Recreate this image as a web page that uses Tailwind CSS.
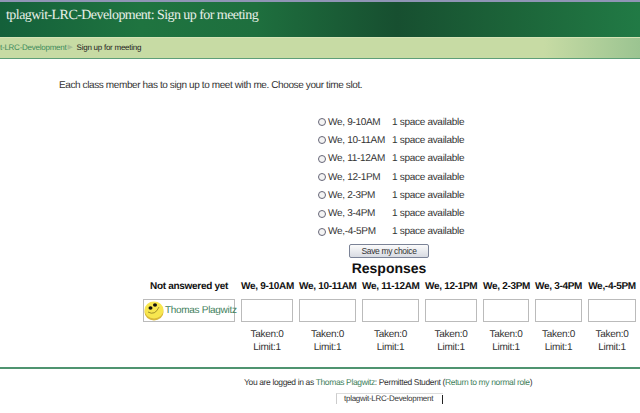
<!DOCTYPE html>
<html lang="en">
<head>
  <meta charset="UTF-8" />
  <title>tplagwit-LRC-Development: Sign up for meeting</title>
  <script src="https://cdn.jsdelivr.net/npm/@tailwindcss/browser@4"></script>
</head>
<body class="w-[640px] h-[413px] overflow-hidden bg-white font-['Liberation_Sans',Arial,sans-serif] text-[#333] [text-rendering:geometricPrecision]">
  <div class="h-[2px] bg-[#8f95b5]"></div>
  <header class="h-[35px] pl-[6px] pt-[5px] bg-[linear-gradient(90deg,#14603a_0%,#1f7440_22%,#1e6f3e_40%,#174f30_62%,#1c6439_80%,#217a45_100%)]">
    <h1 class="font-['Liberation_Serif',serif] text-[14px] tracking-[-0.55px] leading-[18px] text-[#e8f0e8]">tplagwit-LRC-Development: Sign up for meeting</h1>
  </header>
  <nav class="h-[22px] flex items-center overflow-hidden border-t border-b border-t-[#d5e3b5] border-b-[#5f9f78] bg-[linear-gradient(90deg,#c7dba4_0%,#c7dba4_85%,#9bc491_100%)] text-[8px] tracking-[-0.25px]">
    <a href="#" class="text-[#3d8a5a] whitespace-nowrap">t-LRC-Development</a>
    <span class="ml-[1px] text-[7px] text-[#a8bd95]">&#9654;</span>
    <span class="ml-[4px] text-[#222]">Sign up for meeting</span>
  </nav>

  <p class="mt-[20px] ml-[59px] text-[10px] tracking-[-0.39px] leading-[13px]">Each class member has to sign up to meet with me. Choose your time slot.</p>

  <form class="mt-[21px] ml-[318px] flex flex-col text-[10px] tracking-[-0.3px] whitespace-nowrap">
    <label class="h-[18.3px] flex items-center"><span class="w-[8px] h-[8px] rounded-full border border-[#667] bg-[#f4f4f4]"></span><span class="ml-[2px] w-[64px]">We, 9-10AM</span><span>1 space available</span></label>
    <label class="h-[18.3px] flex items-center"><span class="w-[8px] h-[8px] rounded-full border border-[#667] bg-[#f4f4f4]"></span><span class="ml-[2px] w-[64px]">We, 10-11AM</span><span>1 space available</span></label>
    <label class="h-[18.3px] flex items-center"><span class="w-[8px] h-[8px] rounded-full border border-[#667] bg-[#f4f4f4]"></span><span class="ml-[2px] w-[64px]">We, 11-12AM</span><span>1 space available</span></label>
    <label class="h-[18.3px] flex items-center"><span class="w-[8px] h-[8px] rounded-full border border-[#667] bg-[#f4f4f4]"></span><span class="ml-[2px] w-[64px]">We, 12-1PM</span><span>1 space available</span></label>
    <label class="h-[18.3px] flex items-center"><span class="w-[8px] h-[8px] rounded-full border border-[#667] bg-[#f4f4f4]"></span><span class="ml-[2px] w-[64px]">We, 2-3PM</span><span>1 space available</span></label>
    <label class="h-[18.3px] flex items-center"><span class="w-[8px] h-[8px] rounded-full border border-[#667] bg-[#f4f4f4]"></span><span class="ml-[2px] w-[64px]">We, 3-4PM</span><span>1 space available</span></label>
    <label class="h-[18.3px] flex items-center"><span class="w-[8px] h-[8px] rounded-full border border-[#667] bg-[#f4f4f4]"></span><span class="ml-[2px] w-[64px]">We,-4-5PM</span><span>1 space available</span></label>
    <button type="button" class="mt-[3px] ml-[31px] w-[80px] h-[14px] rounded-[2px] border border-[#7a8296] bg-[linear-gradient(180deg,#fbfbfb,#d8dbe2)] text-[8.5px] tracking-[-0.35px] leading-[12px] text-[#333]">Save my choice</button>
  </form>

  <h2 class="mt-[2px] ml-[269px] w-[240px] text-center text-[14px] leading-[17px] font-bold text-[#111]">Responses</h2>

  <section class="mt-[3px] pl-[143px] grid grid-cols-[92px_52px_57px_57px_52px_46px_47px_48px] gap-x-[6px] text-[10px] tracking-[-0.3px] text-center">
    <div class="h-[19px] leading-[13px] font-bold text-[#111] whitespace-nowrap">Not answered yet</div>
    <div class="h-[19px] leading-[13px] font-bold text-[#111] whitespace-nowrap">We, 9-10AM</div>
    <div class="h-[19px] leading-[13px] font-bold text-[#111] whitespace-nowrap">We, 10-11AM</div>
    <div class="h-[19px] leading-[13px] font-bold text-[#111] whitespace-nowrap">We, 11-12AM</div>
    <div class="h-[19px] leading-[13px] font-bold text-[#111] whitespace-nowrap">We, 12-1PM</div>
    <div class="h-[19px] leading-[13px] font-bold text-[#111] whitespace-nowrap">We, 2-3PM</div>
    <div class="h-[19px] leading-[13px] font-bold text-[#111] whitespace-nowrap">We, 3-4PM</div>
    <div class="h-[19px] leading-[13px] font-bold text-[#111] whitespace-nowrap">We,-4-5PM</div>

    <div class="h-[23px] flex items-center border border-[#bbb] whitespace-nowrap">
      <svg class="w-[20px] h-[21px] shrink-0" viewBox="0 0 20 21">
        <ellipse cx="10" cy="12" rx="9.5" ry="8.5" fill="#d9b93a" />
        <ellipse cx="10" cy="10" rx="9.5" ry="8.5" fill="#f7e64f" />
        <ellipse cx="6.5" cy="8" rx="2" ry="1.7" fill="#111" />
        <ellipse cx="11" cy="5" rx="2" ry="1.7" fill="#111" />
        <path d="M4 12 Q11 16 15 7" fill="none" stroke="#8a7a20" stroke-width="0.8" />
      </svg>
      <a href="#" class="ml-[1px] text-[#3f7f5c]">Thomas Plagwitz</a>
    </div>
    <div class="h-[23px] border border-[#bbb]"></div>
    <div class="h-[23px] border border-[#bbb]"></div>
    <div class="h-[23px] border border-[#bbb]"></div>
    <div class="h-[23px] border border-[#bbb]"></div>
    <div class="h-[23px] border border-[#bbb]"></div>
    <div class="h-[23px] border border-[#bbb]"></div>
    <div class="h-[23px] border border-[#bbb]"></div>

    <div></div>
    <div class="mt-[6px] leading-[13px]">Taken:0<br>Limit:1</div>
    <div class="mt-[6px] leading-[13px]">Taken:0<br>Limit:1</div>
    <div class="mt-[6px] leading-[13px]">Taken:0<br>Limit:1</div>
    <div class="mt-[6px] leading-[13px]">Taken:0<br>Limit:1</div>
    <div class="mt-[6px] leading-[13px]">Taken:0<br>Limit:1</div>
    <div class="mt-[6px] leading-[13px]">Taken:0<br>Limit:1</div>
    <div class="mt-[6px] leading-[13px]">Taken:0<br>Limit:1</div>
  </section>

  <footer class="mt-[13px] border-t-2 border-[#4f9470] text-[8.5px] tracking-[-0.37px]">
    <p class="mt-[8px] ml-[244px] leading-[11px] whitespace-nowrap">You are logged in as <a href="#" class="text-[#3f7f5c]">Thomas Plagwitz</a>: Permitted Student (<a href="#" class="text-[#3f7f5c]">Return to my normal role</a>)</p>
    <div class="mt-[5px] ml-[336px] w-[107px] h-[11px] flex border-l border-t border-t-[#ddd] border-l-[#ccc]">
      <span class="pl-[7px] w-[105px] text-[8px] tracking-[-0.27px] leading-[10px] whitespace-nowrap">tplagwit-LRC-Development</span>
      <span class="w-[1px] h-[9px] mt-[1px] bg-[#222]"></span>
    </div>
  </footer>
</body>
</html>
